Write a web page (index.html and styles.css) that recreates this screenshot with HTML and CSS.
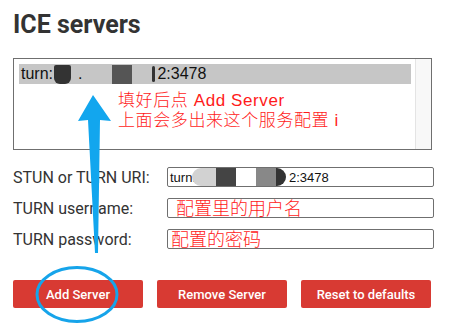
FILE: index.html
```html
<!DOCTYPE html>
<html lang="en">
<head>
    <meta charset="UTF-8">
    <meta name="viewport" content="width=device-width, initial-scale=1.0">
    <title>ICE servers</title>
    <link rel="stylesheet" href="styles.css">
</head>
<body>

    <div class="page">
        <h2 class="title">ICE servers</h2>

        <div class="server-list">
            <div class="options">
                <div class="option">
                    <span>turn:</span>
                    <span class="blot blot-a"></span>
                    <span class="dot">.</span>
                    <span class="blot blot-b"></span>
                    <span class="blot blot-c"></span>
                    <span>2:3478</span>
                </div>
            </div>
            <div class="scrollbar"></div>
        </div>

        <div class="form">
            <label class="label">STUN or TURN URI:</label>
            <div class="input">
                <span>turn.</span>
                <span class="blot blot-d"></span>
                <span class="blot blot-e"></span>
                <span class="blot blot-f"></span>
                <span class="blot blot-g"></span>
                <span class="blot blot-h"></span>
                <span>2:3478</span>
            </div>

            <label class="label">TURN username:</label>
            <div class="input"></div>

            <label class="label">TURN password:</label>
            <div class="input"></div>
        </div>

        <div class="buttons">
            <button class="btn">Add Server</button>
            <button class="btn">Remove Server</button>
            <button class="btn">Reset to defaults</button>
        </div>

        <!-- annotations drawn over the screenshot -->
        <p class="note note-list">填好后点 Add Server<br>上面会多出来这个服务配置 i</p>
        <p class="note note-user">配置里的用户名</p>
        <p class="note note-pass">配置的密码</p>

        <svg class="marks" width="471" height="330" viewBox="0 0 471 330">
            <polygon points="93,95 111,121 100,120 98,253 95,253 88,120 78,121" fill="#12a6ee"/>
            <ellipse cx="77" cy="294.5" rx="40" ry="27" fill="none" stroke="#16a4ea" stroke-width="3"/>
        </svg>
    </div>

</body>
</html>
```

FILE: styles.css
```css
body {
    margin: 0;
    background-color: #fff;
    font-family: Roboto, "Noto Sans CJK SC", sans-serif;
    color: #333;
}

.page {
    position: relative;
    width: 471px;
    height: 330px;
    padding: 10px 0 0 13px;
    box-sizing: border-box;
}

.title {
    margin: 0 0 19px 0;
    font-size: 25px;
    line-height: 29px;
    font-weight: 700;
    color: #333;
}

.server-list {
    display: flex;
    width: 419px;
    height: 92px;
    border: 1px solid #6f6f6f;
    box-sizing: border-box;
}

.options {
    flex: 1;
    padding: 5px 4px 0 5px;
}

.option {
    display: flex;
    align-items: center;
    height: 20px;
    padding-left: 2px;
    background-color: #c6c6c6;
    font-family: "Liberation Sans", sans-serif;
    font-size: 16px;
    color: #111;
}

.scrollbar {
    width: 15px;
    background-color: #f8f8f8;
    border-left: 1px solid #e4e4e4;
}

.blot {
    display: inline-block;
    height: 19px;
}

.blot-a {
    width: 17px;
    margin-left: 1px;
    background-color: #333;
    border-radius: 2px 2px 6px 6px;
}

.dot {
    margin-left: 7px;
}

.blot-b {
    width: 20px;
    margin-left: 30px;
    background-color: #555;
}

.blot-c {
    width: 3px;
    height: 16px;
    margin: 0 2px 0 20px;
    background-color: #333;
    border-radius: 2px;
}

.form {
    display: grid;
    grid-template-columns: 154px 267px;
    row-gap: 11px;
    align-items: center;
    margin-top: 17px;
}

.label {
    font-size: 16px;
    color: #333;
}

.input {
    display: flex;
    align-items: center;
    height: 20px;
    padding-left: 2px;
    border: 1px solid #6f6f6f;
    border-radius: 2px;
    box-sizing: border-box;
    font-family: "Liberation Sans", sans-serif;
    font-size: 13px;
    color: #111;
    overflow: hidden;
}

.input .blot {
    height: 18px;
}

.blot-d {
    width: 24px;
    margin-left: -4px;
    background-color: #d2d2d2;
    border-radius: 9px 0 0 9px;
}

.blot-e {
    width: 20px;
    background-color: #444;
}

.blot-f {
    width: 20px;
    background-color: #fff;
}

.blot-g {
    width: 20px;
    background-color: #888;
}

.blot-h {
    width: 10px;
    margin-right: 3px;
    background-color: #333;
    border-radius: 0 9px 9px 0;
}

.buttons {
    display: flex;
    gap: 14px;
    margin-top: 31px;
}

.btn {
    width: 130px;
    height: 28px;
    border: none;
    border-radius: 2px;
    background-color: #d83a33;
    color: #fff;
    font-family: Roboto, sans-serif;
    font-size: 13px;
    font-weight: 500;
}

.note {
    position: absolute;
    margin: 0;
    color: #ff1a1a;
    font-family: "Liberation Sans", "Noto Sans CJK SC", sans-serif;
    font-weight: 300;
    white-space: nowrap;
}

.note-list {
    left: 118px;
    top: 91px;
    font-size: 17px;
    line-height: 20px;
    letter-spacing: 0.6px;
}

.note-user {
    left: 176px;
    top: 197px;
    font-size: 18px;
    line-height: 24px;
}

.note-pass {
    left: 171px;
    top: 228px;
    font-size: 18px;
    line-height: 24px;
}

.marks {
    position: absolute;
    left: 0;
    top: 0;
    pointer-events: none;
}
```
